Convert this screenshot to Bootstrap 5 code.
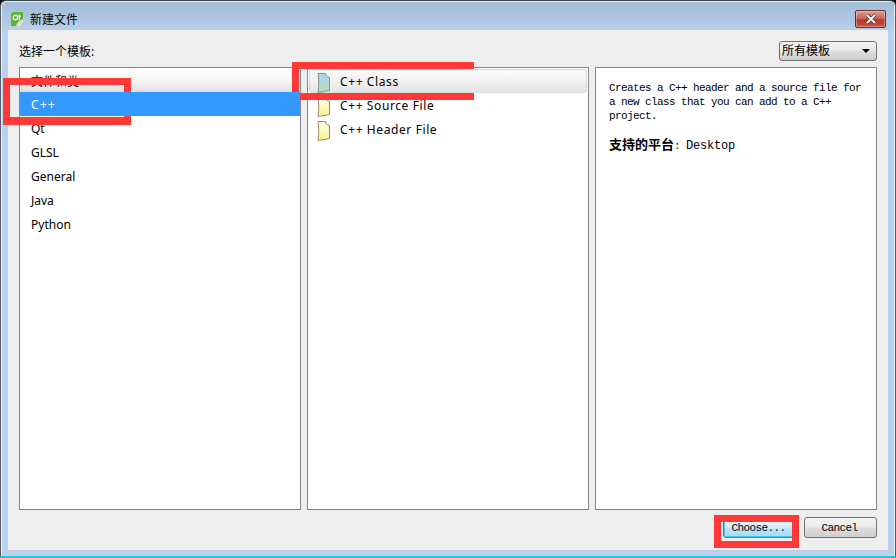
<!DOCTYPE html>
<html lang="zh">
<head>
<meta charset="utf-8">
<title>新建文件</title>
<link href="https://cdn.jsdelivr.net/npm/bootstrap@5.3.0/dist/css/bootstrap.min.css" rel="stylesheet">
<style>
html,body{width:896px;height:558px;margin:0;overflow:hidden;background:#111;}
body{font-family:"Noto Sans","Noto Sans CJK SC",sans-serif;font-size:12px;color:#000;}
.win-shell{position:relative;width:896px;height:558px;border-top:1px solid #3a3f45;border-left:1px solid #555b62;border-right:1px solid #555b62;border-bottom:2px solid #27c4d4;border-radius:6px 6px 0 0;background:linear-gradient(#9fbbd8 0,#b9d1ea 30px);box-shadow:inset 1px 1px 0 #e8eef5,inset -1px 0 0 #e8eef5;padding:0 7px 5px 7px;}
.title-row{height:29px;}
.title-text{font-size:12px;font-family:"Noto Sans CJK SC",sans-serif;margin-left:7px;margin-top:1px;}
.qt-logo{width:12px;height:14px;margin-left:3px;margin-top:1px;}
.close-x{width:31px;height:18px;margin-right:2px;margin-top:9px;border:1px solid #6b2b2b;border-radius:2px;background:linear-gradient(#d99a90 0,#c9695c 45%,#b23a2c 55%,#c8503f 100%);padding:0;display:flex;align-items:center;justify-content:center;box-shadow:inset 0 0 0 1px rgba(255,255,255,.35);}
.client{background:#eeeeee;height:520px;padding:11px 11px 0 11px;}
.top-row{height:20px;margin-bottom:6px;}
.pick-label{font-size:12px;line-height:20px;padding-top:1px;}
.tpl-combo{width:98px;height:20px;border:1px solid #707070;border-radius:3px;background:linear-gradient(#f2f2f2 0,#ebebeb 45%,#dcdcdc 55%,#cfcfcf 100%);font-size:12px;padding:0 6px 0 2px;line-height:18px;color:#000;}
.caret-down{width:0;height:0;border-left:4px solid transparent;border-right:4px solid transparent;border-top:4px solid #000;}
.panes{height:443px;gap:6px;}
.pane-box{flex:none;width:282px;background:#fff;border:1px solid #828790;border-radius:0;}
.cat-list .list-group-item,.file-list .list-group-item{border:0;padding:0;margin:0;background:transparent;color:#000;font-size:12px;line-height:24px;height:24px;}
.cat-list .list-group-item{padding-left:11px;padding-top:1px;}
.cat-list .list-group-item.cat-head{background:linear-gradient(#fff 0,#f3f3f3 60%,#dedede 100%);height:24px;padding-top:2px;}
.cat-list .list-group-item.active{background:#3399ff;color:#fff;letter-spacing:1.3px;margin-top:0;}
.file-list{padding:1px 1px 0 1px;}
.file-list .list-group-item{display:flex;align-items:center;padding-left:7px;gap:9px;letter-spacing:.6px;}
.file-list .list-group-item>span{padding-top:2px;}
.file-list .list-group-item.active{background:linear-gradient(#fbfbfb 0,#f1f1f1 50%,#e4e4e4 100%);border:1px solid #d9d9d9;border-radius:3px;padding-left:6px;color:#000;}
.file-ico{width:15px;height:22px;flex:none;margin-top:4px;}
.desc-pane{padding:13px 12px 13px 13px;font-family:"Liberation Mono",monospace;font-size:11px;letter-spacing:-.6px;line-height:14px;}
.desc-text{margin:0 0 14px 0;}
.plat-name{font-family:"Noto Sans CJK SC",sans-serif;font-weight:700;font-size:13px;letter-spacing:0;}
.plat-val{font-size:12px;letter-spacing:-.2px;}
.foot-row{padding-top:7px;gap:8px;}
.dlg-btn{width:73px;height:21px;padding:1px 2px 0 0;font-family:"Liberation Mono",monospace;font-size:11px;letter-spacing:-.6px;line-height:19px;color:#000;border:1px solid #707070;border-radius:3px;background:linear-gradient(#f2f2f2 0,#ebebeb 45%,#dcdcdc 55%,#cfcfcf 100%);}
.dlg-btn.is-default{border-color:#3c7fb1;background:linear-gradient(#eaf6fd 0,#d9f0fc 45%,#bee6fd 55%,#a7d9f5 100%);box-shadow:inset 0 0 0 1px #48c6f0;}
.mark-box{position:absolute;border:7px solid #ff3838;pointer-events:none;}
.mark-a{left:2px;top:77px;width:128px;height:47px;border-bottom-width:8px;}
.mark-b{left:291px;top:61px;width:182px;height:38px;}
.mark-c{left:713px;top:514px;width:85px;height:33px;}
</style>
</head>
<body>
<div class="win-shell">
  <div class="title-row d-flex align-items-start justify-content-between">
    <div class="d-flex align-items-center mt-2">
      <svg class="qt-logo" viewBox="0 0 12 14" aria-hidden="true"><path d="M2 0H12V11L10 14H0V2Z" fill="#5cb531"/><path d="M5 14C6 10 9 8 12 7V11L10 14Z" fill="#d8e0d0"/><circle cx="4.4" cy="5.6" r="2.2" fill="none" stroke="#fff" stroke-width="1.2"/><path d="M8.2 2.6V8.5M6.6 4.2H10" stroke="#fff" stroke-width="1.1" fill="none"/></svg>
      <span class="title-text">新建文件</span>
    </div>
    <button class="close-x" type="button" aria-label="Close">
      <svg width="14" height="10" viewBox="0 0 14 10" aria-hidden="true"><path d="M3 1L11 9M11 1L3 9" stroke="#3a2a2a" stroke-width="3.4"/><path d="M3 1L11 9M11 1L3 9" stroke="#f4f4f4" stroke-width="2.2"/></svg>
    </button>
  </div>
  <div class="client">
    <div class="top-row d-flex justify-content-between align-items-center">
      <span class="pick-label">选择一个模板:</span>
      <div class="tpl-combo d-flex justify-content-between align-items-center"><span>所有模板</span><span class="caret-down"></span></div>
    </div>
    <div class="panes d-flex">
      <div class="pane-box">
        <div class="list-group list-group-flush cat-list">
          <div class="list-group-item cat-head">文件和类</div>
          <div class="list-group-item active">C++</div>
          <div class="list-group-item">Qt</div>
          <div class="list-group-item">GLSL</div>
          <div class="list-group-item">General</div>
          <div class="list-group-item">Java</div>
          <div class="list-group-item">Python</div>
        </div>
      </div>
      <div class="pane-box">
        <div class="list-group list-group-flush file-list">
          <div class="list-group-item active">
            <svg class="file-ico" viewBox="0 0 15 22" aria-hidden="true"><defs><linearGradient id="gb" x1="0" y1="0" x2="0" y2="1"><stop offset="0" stop-color="#a9d4f2"/><stop offset="1" stop-color="#b9dcb5"/></linearGradient></defs><path d="M2 1.5H9.5C10 3.5 11.5 5 13.5 5.5V18.5L2 20.5C3 14 3 7 2 1.5Z" fill="url(#gb)" stroke="#7d9299"/><path d="M9.5 1.5C9.8 4 10.8 5 13.5 5.5" fill="#eef6fa" stroke="#8aa0a8"/></svg>
            <span>C++ Class</span>
          </div>
          <div class="list-group-item">
            <svg class="file-ico" viewBox="0 0 15 22" aria-hidden="true"><defs><linearGradient id="gy" x1="0" y1="0" x2="0" y2="1"><stop offset="0" stop-color="#fffff0"/><stop offset="1" stop-color="#fbf28a"/></linearGradient></defs><path d="M2 1.5H9.5C10 3.5 11.5 5 13.5 5.5V18.5L2 20.5C3 14 3 7 2 1.5Z" fill="url(#gy)" stroke="#a08c60"/><path d="M9.5 1.5C9.8 4 10.8 5 13.5 5.5" fill="#fff" stroke="#a08c60"/></svg>
            <span>C++ Source File</span>
          </div>
          <div class="list-group-item">
            <svg class="file-ico" viewBox="0 0 15 22" aria-hidden="true"><path d="M2 1.5H9.5C10 3.5 11.5 5 13.5 5.5V18.5L2 20.5C3 14 3 7 2 1.5Z" fill="url(#gy)" stroke="#a08c60"/><path d="M9.5 1.5C9.8 4 10.8 5 13.5 5.5" fill="#fff" stroke="#a08c60"/></svg>
            <span>C++ Header File</span>
          </div>
        </div>
      </div>
      <div class="pane-box desc-pane">
        <p class="desc-text">Creates a C++ header and a source file for a new class that you can add to a C++ project.</p>
        <div><span class="plat-name">支持的平台</span>: <span class="plat-val">Desktop</span></div>
      </div>
    </div>
    <div class="foot-row d-flex justify-content-end">
      <button class="dlg-btn is-default" type="button">Choose...</button>
      <button class="dlg-btn" type="button">Cancel</button>
    </div>
  </div>
  <div class="mark-box mark-a"></div>
  <div class="mark-box mark-b"></div>
  <div class="mark-box mark-c"></div>
</div>
</body>
</html>
